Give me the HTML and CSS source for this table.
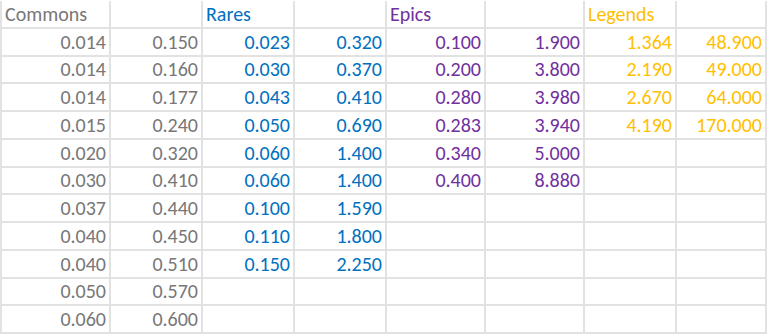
FILE: index.html
```html
<!DOCTYPE html>
<html lang="en">
<head>
    <meta charset="UTF-8">
    <meta name="viewport" content="width=device-width, initial-scale=1.0">
    <title>Drop rates</title>
    <link rel="stylesheet" href="styles.css">
</head>
<body>
    <div class="sheet">
        <!-- header -->
        <div class="cell grey">Commons</div>
        <div class="cell"></div>
        <div class="cell blue">Rares</div>
        <div class="cell"></div>
        <div class="cell purple">Epics</div>
        <div class="cell"></div>
        <div class="cell gold">Legends</div>
        <div class="cell last"></div>

        <div class="cell num grey">0.014</div>
        <div class="cell num grey">0.150</div>
        <div class="cell num blue">0.023</div>
        <div class="cell num blue">0.320</div>
        <div class="cell num purple">0.100</div>
        <div class="cell num purple">1.900</div>
        <div class="cell num gold">1.364</div>
        <div class="cell num gold last">48.900</div>

        <div class="cell num grey">0.014</div>
        <div class="cell num grey">0.160</div>
        <div class="cell num blue">0.030</div>
        <div class="cell num blue">0.370</div>
        <div class="cell num purple">0.200</div>
        <div class="cell num purple">3.800</div>
        <div class="cell num gold">2.190</div>
        <div class="cell num gold last">49.000</div>

        <div class="cell num grey">0.014</div>
        <div class="cell num grey">0.177</div>
        <div class="cell num blue">0.043</div>
        <div class="cell num blue">0.410</div>
        <div class="cell num purple">0.280</div>
        <div class="cell num purple">3.980</div>
        <div class="cell num gold">2.670</div>
        <div class="cell num gold last">64.000</div>

        <div class="cell num grey">0.015</div>
        <div class="cell num grey">0.240</div>
        <div class="cell num blue">0.050</div>
        <div class="cell num blue">0.690</div>
        <div class="cell num purple">0.283</div>
        <div class="cell num purple">3.940</div>
        <div class="cell num gold">4.190</div>
        <div class="cell num gold last">170.000</div>

        <div class="cell num grey">0.020</div>
        <div class="cell num grey">0.320</div>
        <div class="cell num blue">0.060</div>
        <div class="cell num blue">1.400</div>
        <div class="cell num purple">0.340</div>
        <div class="cell num purple">5.000</div>
        <div class="cell"></div>
        <div class="cell last"></div>

        <div class="cell num grey">0.030</div>
        <div class="cell num grey">0.410</div>
        <div class="cell num blue">0.060</div>
        <div class="cell num blue">1.400</div>
        <div class="cell num purple">0.400</div>
        <div class="cell num purple">8.880</div>
        <div class="cell"></div>
        <div class="cell last"></div>

        <div class="cell num grey">0.037</div>
        <div class="cell num grey">0.440</div>
        <div class="cell num blue">0.100</div>
        <div class="cell num blue">1.590</div>
        <div class="cell"></div>
        <div class="cell"></div>
        <div class="cell"></div>
        <div class="cell last"></div>

        <div class="cell num grey">0.040</div>
        <div class="cell num grey">0.450</div>
        <div class="cell num blue">0.110</div>
        <div class="cell num blue">1.800</div>
        <div class="cell"></div>
        <div class="cell"></div>
        <div class="cell"></div>
        <div class="cell last"></div>

        <div class="cell num grey">0.040</div>
        <div class="cell num grey">0.510</div>
        <div class="cell num blue">0.150</div>
        <div class="cell num blue">2.250</div>
        <div class="cell"></div>
        <div class="cell"></div>
        <div class="cell"></div>
        <div class="cell last"></div>

        <div class="cell num grey">0.050</div>
        <div class="cell num grey">0.570</div>
        <div class="cell"></div>
        <div class="cell"></div>
        <div class="cell"></div>
        <div class="cell"></div>
        <div class="cell"></div>
        <div class="cell last"></div>

        <div class="cell num grey">0.060</div>
        <div class="cell num grey">0.600</div>
        <div class="cell"></div>
        <div class="cell"></div>
        <div class="cell"></div>
        <div class="cell"></div>
        <div class="cell"></div>
        <div class="cell last"></div>
    </div>
</body>
</html>
```

FILE: styles.css
```css
* {
    margin: 0;
    padding: 0;
    box-sizing: border-box;
}

body {
    background: #fff;
    font-family: Calibri, Carlito, 'Open Sans', sans-serif;
    overflow: hidden;
}

.sheet {
    display: grid;
    grid-template-columns: 109px 92px 92px 92px 99px 99px 92px 92px;
    grid-auto-rows: 27.75px;
    margin-top: 1px;
}

.cell {
    display: flex;
    align-items: flex-end;
    padding: 0 3px 3px 3px;
    border-left: 2px solid #e2e2e2;
    border-bottom: 2px solid #e2e2e2;
    font-size: 20px;
    line-height: 20px;
    white-space: nowrap;
}

.cell.last {
    border-right: 2px solid #e2e2e2;
}

.num {
    justify-content: flex-end;
}

.grey {
    color: #777777;
}

.blue {
    color: #0070c0;
}

.purple {
    color: #7030a0;
}

.gold {
    color: #ffc000;
}
```
